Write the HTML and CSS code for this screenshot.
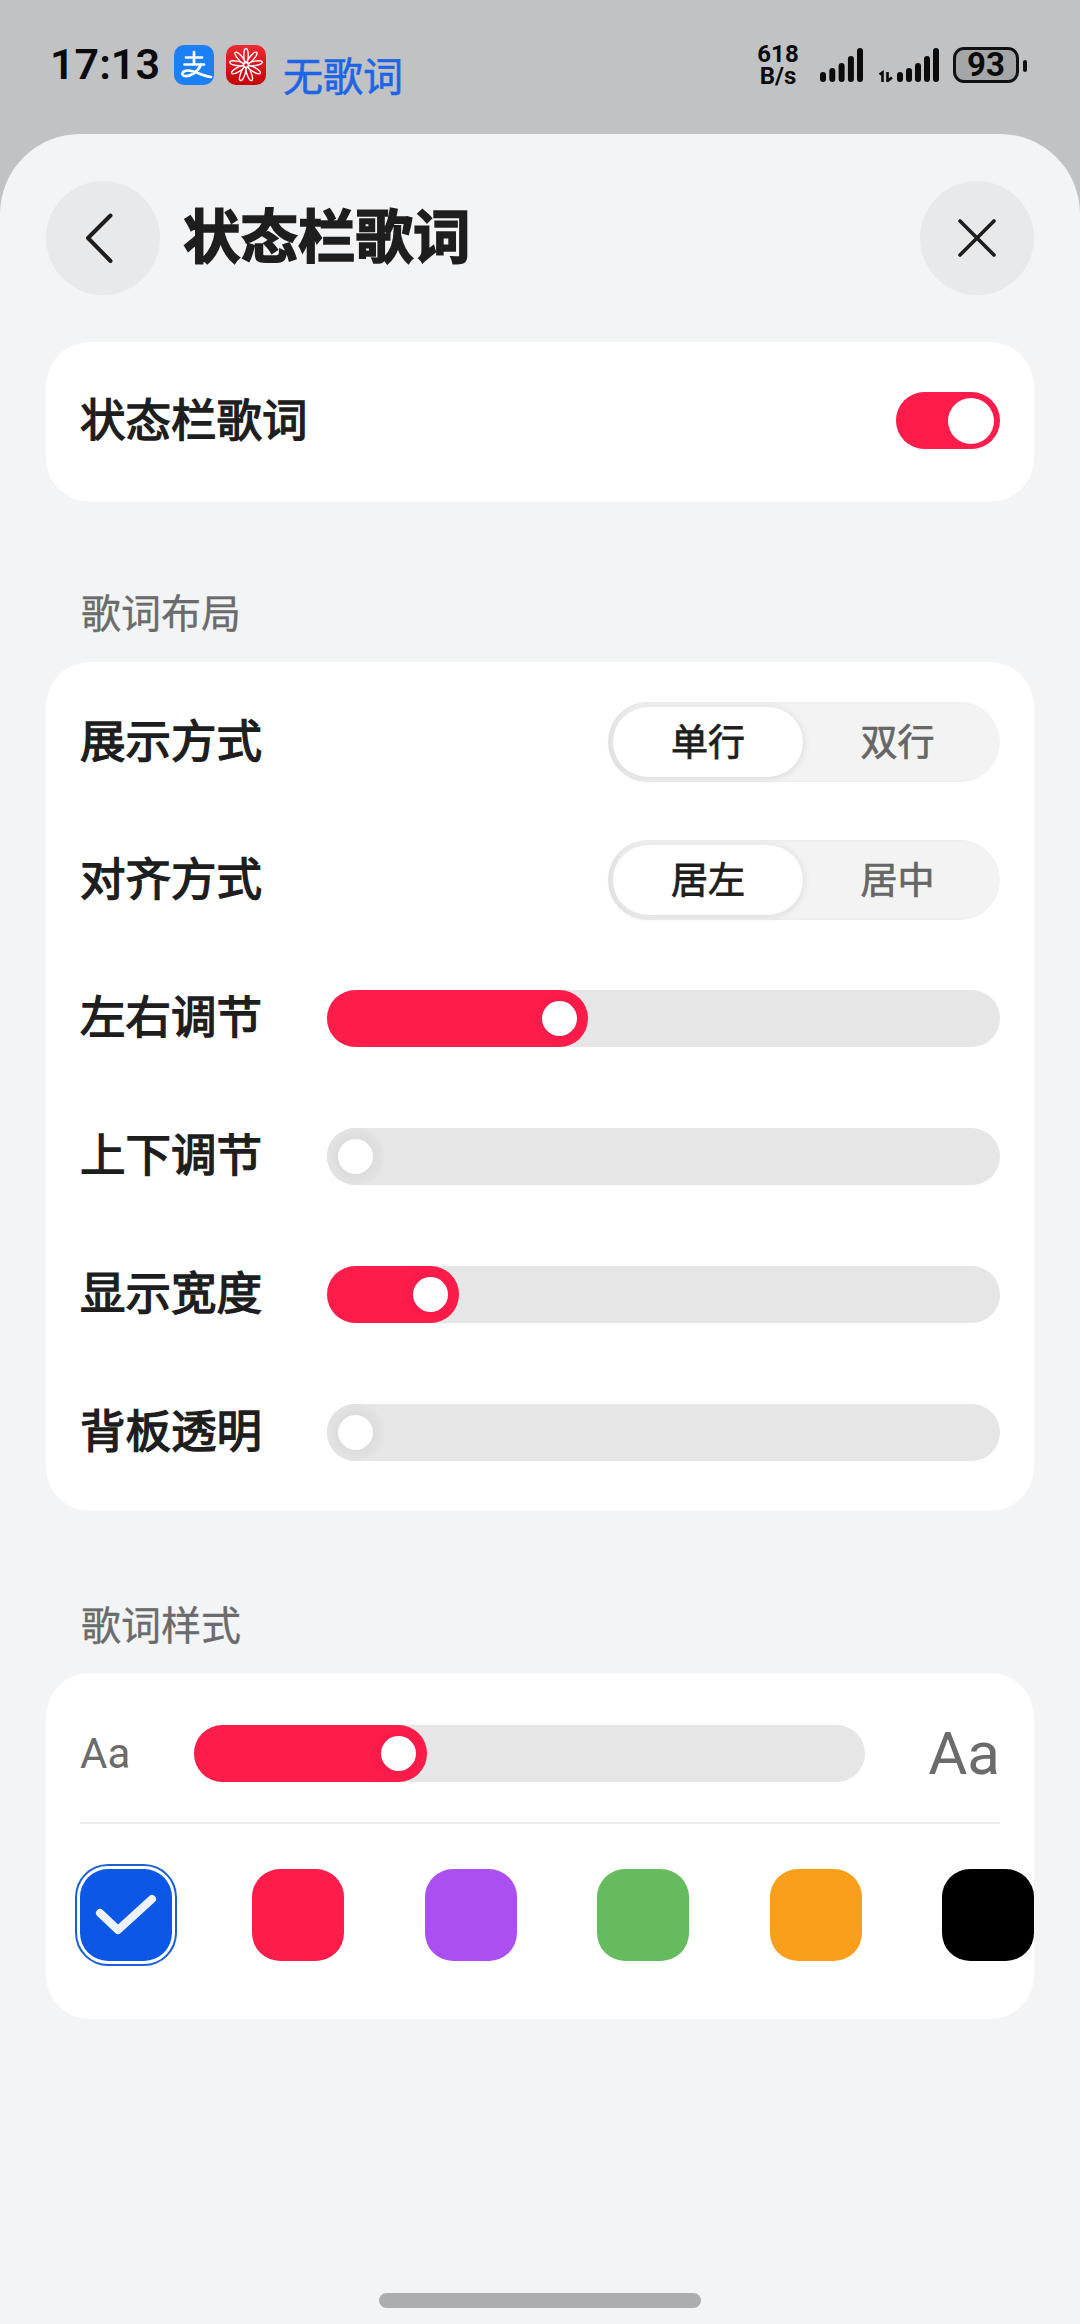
FILE: index.html
```html
<!DOCTYPE html>
<html>
<head>
	<title>状态栏歌词</title>
	<link rel="stylesheet" href="styles.css">
</head>
<body>
	<div id="statusbar">
		<div class="time">17:13</div>
		<svg class="app-icon" viewBox="0 0 40 40">
			<rect width="40" height="40" rx="10" fill="#1b7ff5"/>
			<path d="M12 12.500H28M20 7V19.500M10.500 19.500H30M27 19.500C24 27 16 32 11 31C6.500 30 8 25.500 14 25.500C21 25.500 28 31 37 32" fill="none" stroke="#fff" stroke-width="2.700" stroke-linecap="round"/>
		</svg>
		<svg class="app-icon app-icon-second" viewBox="0 0 40 40">
			<defs>
				<linearGradient id="redIcon" x1="0" y1="0" x2="0" y2="1">
					<stop offset="0" stop-color="#ee2a32"/>
					<stop offset="1" stop-color="#c90009"/>
				</linearGradient>
			</defs>
			<rect width="40" height="40" rx="10" fill="url(#redIcon)"/>
			<g fill="none" stroke="#fff" stroke-width="1.400">
				<ellipse cx="20" cy="10.500" rx="2.200" ry="7"/>
				<ellipse cx="20" cy="10.500" rx="2.200" ry="7" transform="rotate(40 20 20)"/>
				<ellipse cx="20" cy="10.500" rx="2.200" ry="7" transform="rotate(80 20 20)"/>
				<ellipse cx="20" cy="10.500" rx="2.200" ry="7" transform="rotate(120 20 20)"/>
				<ellipse cx="20" cy="10.500" rx="2.200" ry="7" transform="rotate(160 20 20)"/>
				<ellipse cx="20" cy="10.500" rx="2.200" ry="7" transform="rotate(200 20 20)"/>
				<ellipse cx="20" cy="10.500" rx="2.200" ry="7" transform="rotate(240 20 20)"/>
				<ellipse cx="20" cy="10.500" rx="2.200" ry="7" transform="rotate(280 20 20)"/>
				<ellipse cx="20" cy="10.500" rx="2.200" ry="7" transform="rotate(320 20 20)"/>
			</g>
			<circle cx="20" cy="20" r="2.500" fill="none" stroke="#fff" stroke-width="1.400"/>
		</svg>
		<div class="lyric-text">无歌词</div>
		<div class="status-right">
			<div class="net-speed">618<br>B/s</div>
			<svg class="signal" width="43" height="34" viewBox="0 0 43 34">
				<rect x="0" y="24" width="6" height="10" rx="3"/>
				<rect x="9.300" y="20" width="6" height="14" rx="3"/>
				<rect x="18.600" y="15" width="6" height="19" rx="3"/>
				<rect x="27.900" y="8" width="6" height="26" rx="3"/>
				<rect x="37" y="0" width="6" height="34" rx="3"/>
			</svg>
			<svg class="signal signal-second" width="60" height="34" viewBox="0 0 60 34">
				<path d="M0.500 26.500L3.500 24.500V34M8.500 24V34M13 29.500L8.500 33" fill="none" stroke="#0b0b0b" stroke-width="2.600"/>
				<rect x="18" y="24" width="6" height="10" rx="3"/>
				<rect x="27" y="20" width="6" height="14" rx="3"/>
				<rect x="36" y="15" width="6" height="19" rx="3"/>
				<rect x="45" y="8" width="6" height="26" rx="3"/>
				<rect x="54" y="0" width="6" height="34" rx="3"/>
			</svg>
			<div class="battery"><span class="battery-num">93</span></div>
			<div class="battery-nib"></div>
		</div>
	</div>

	<div id="sheet">
		<div class="header">
			<div class="round-btn">
				<svg width="40" height="60" viewBox="0 0 40 60"><path d="M27.500 7.500L5 30L27.500 53" fill="none" stroke="#1e1e1e" stroke-width="4" stroke-linecap="round" stroke-linejoin="round"/></svg>
			</div>
			<div class="title">状态栏歌词</div>
			<div class="round-btn round-btn-right">
				<svg width="40" height="40" viewBox="0 0 40 40"><path d="M3 3L37 37M37 3L3 37" fill="none" stroke="#1e1e1e" stroke-width="3.600" stroke-linecap="round"/></svg>
			</div>
		</div>

		<div class="card card-switch">
			<div class="label">状态栏歌词</div>
			<div class="toggle"><div class="toggle-knob"></div></div>
		</div>

		<div class="section-label">歌词布局</div>
		<div class="card card-rows">
			<div class="row">
				<div class="label">展示方式</div>
				<div class="segment">
					<div class="segment-item active">单行</div>
					<div class="segment-item">双行</div>
				</div>
			</div>
			<div class="row">
				<div class="label">对齐方式</div>
				<div class="segment">
					<div class="segment-item active">居左</div>
					<div class="segment-item">居中</div>
				</div>
			</div>
			<div class="row">
				<div class="label label-fixed">左右调节</div>
				<div class="slider"><div class="slider-fill" style="width: 261px"><div class="slider-knob"></div></div></div>
			</div>
			<div class="row">
				<div class="label label-fixed">上下调节</div>
				<div class="slider"><div class="slider-fill off" style="width: 57px"><div class="slider-knob"></div></div></div>
			</div>
			<div class="row">
				<div class="label label-fixed">显示宽度</div>
				<div class="slider"><div class="slider-fill" style="width: 132px"><div class="slider-knob"></div></div></div>
			</div>
			<div class="row">
				<div class="label label-fixed">背板透明</div>
				<div class="slider"><div class="slider-fill off" style="width: 57px"><div class="slider-knob"></div></div></div>
			</div>
		</div>

		<div class="section-label section-label-second">歌词样式</div>
		<div class="card card-style">
			<div class="size-row">
				<div class="aa-small">Aa</div>
				<div class="slider"><div class="slider-fill" style="width: 233px"><div class="slider-knob"></div></div></div>
				<div class="aa-big">Aa</div>
			</div>
			<div class="divider"></div>
			<div class="swatches">
				<div class="swatch selected blue">
					<svg width="62" height="42" viewBox="0 0 62 42"><path d="M5 19L23 36L57 5" fill="none" stroke="#eef2fb" stroke-width="8" stroke-linecap="round" stroke-linejoin="round"/></svg>
				</div>
				<div class="swatch red"></div>
				<div class="swatch purple"></div>
				<div class="swatch green"></div>
				<div class="swatch orange"></div>
				<div class="swatch black"></div>
			</div>
		</div>

		<div class="home-bar"></div>
	</div>
</body>
</html>
```

FILE: styles.css
```css
* {
	box-sizing: border-box;
}

html, body {
	margin: 0;
	padding: 0;
}

body {
	width: 1080px;
	height: 2324px;
	overflow: hidden;
	background: #c1c2c4;
	font-family: "Noto Sans CJK SC", sans-serif;
	color: #1e1e1e;
}

/* status bar */
#statusbar {
	display: flex;
	align-items: flex-start;
	height: 134px;
	padding-left: 50px;
}

.time {
	margin-top: 39px;
	font-family: Roboto, sans-serif;
	font-size: 43px;
	font-weight: 600;
	line-height: 50px;
	color: #0b0b0b;
}

.app-icon {
	width: 40px;
	height: 40px;
	margin-top: 45px;
	margin-left: 14px;
}

.app-icon-second {
	margin-left: 12px;
}

.lyric-text {
	margin-top: 49px;
	margin-left: 17px;
	font-size: 40px;
	line-height: 50px;
	-webkit-text-stroke: 0.6px #1e65e6;
	color: #1e65e6;
}

.status-right {
	display: flex;
	align-items: flex-start;
	margin-left: auto;
	padding-right: 53px;
}

.net-speed {
	width: 46px;
	margin-top: 43px;
	font-family: Roboto, sans-serif;
	font-size: 24px;
	font-weight: 700;
	line-height: 22px;
	text-align: center;
	color: #0b0b0b;
}

.signal {
	margin-top: 48px;
	margin-left: 19px;
	fill: #0b0b0b;
}

.signal-second {
	margin-left: 16px;
}

.battery {
	display: flex;
	align-items: center;
	justify-content: center;
	width: 66px;
	height: 36px;
	margin-top: 47px;
	margin-left: 14px;
	border: 3px solid #111;
	border-radius: 11px;
	background: #a5a6a8;
}

.battery-num {
	font-family: Roboto, sans-serif;
	font-size: 33px;
	font-weight: 700;
	line-height: 30px;
	color: #0b0b0b;
}

.battery-nib {
	width: 4px;
	height: 12px;
	margin-top: 60px;
	margin-left: 4px;
	border-radius: 2px;
	background: #111;
}

/* sheet */
#sheet {
	height: 2190px;
	padding: 47px 46px 0 46px;
	border-radius: 80px 80px 0 0;
	background: #f2f4f6;
}

.header {
	display: flex;
	align-items: center;
	height: 114px;
}

.round-btn {
	display: flex;
	align-items: center;
	justify-content: center;
	width: 114px;
	height: 114px;
	border-radius: 50%;
	background: #e8e9eb;
}

.round-btn-right {
	margin-left: auto;
}

.title {
	margin-left: 23px;
	padding-bottom: 11px;
	font-size: 57.5px;
	font-weight: 700;
	line-height: 70px;
	-webkit-text-stroke: 1.6px #1e1e1e;
}

.card {
	border-radius: 44px;
	background: #fff;
}

.card-switch {
	display: flex;
	align-items: center;
	justify-content: space-between;
	height: 160px;
	margin-top: 47px;
	padding: 0 34px;
}

.card-switch .label {
	padding-bottom: 11px;
}

.label {
	padding-bottom: 8px;
	font-size: 45.5px;
	font-weight: 400;
	line-height: 60px;
	-webkit-text-stroke: 1.4px #1e1e1e;
}

.label-fixed {
	flex: 0 0 247px;
}

.toggle {
	display: flex;
	justify-content: flex-end;
	align-items: center;
	width: 104px;
	height: 57px;
	margin-bottom: 3px;
	padding-right: 6px;
	border-radius: 29px;
	background: #fe1c4b;
}

.toggle-knob {
	width: 46px;
	height: 46px;
	border-radius: 50%;
	background: #fff;
}

.section-label {
	margin: 84px 0 26px 35px;
	font-size: 40px;
	line-height: 50px;
	-webkit-text-stroke: 0.3px #6b6b6b;
	color: #6b6b6b;
}

.section-label-second {
	margin-top: 87px;
	margin-bottom: 25px;
}

.card-rows {
	padding: 11px 34px 10px 34px;
}

.row {
	display: flex;
	align-items: center;
	justify-content: space-between;
	height: 138px;
}

/* single line / double line switch */
.segment {
	display: flex;
	width: 392px;
	height: 80px;
	padding: 5px 0 5px 5px;
	border-radius: 40px;
	background: #f3f3f3;
	box-shadow: inset 3px 0 3px #e6e6e6;
}

.segment-item {
	display: flex;
	flex: 1;
	align-items: center;
	justify-content: center;
	padding: 0 8px 5px 0;
	border-radius: 35px;
	font-size: 37px;
	-webkit-text-stroke: 0.7px #666;
	color: #666;
}

.segment-item.active {
	flex: 0 0 190px;
	padding-right: 0;
	background: #fff;
	box-shadow: 0 1px 8px rgba(0, 0, 0, 0.12);
	-webkit-text-stroke: 0.8px #1e1e1e;
	color: #1e1e1e;
}

/* sliders */
.slider {
	flex: 1;
	height: 57px;
	border-radius: 29px;
	background: #e6e6e6;
}

.slider-fill {
	display: flex;
	justify-content: flex-end;
	align-items: center;
	height: 100%;
	padding-right: 11px;
	border-radius: 29px;
	background: #fe1c4b;
}

.slider-fill.off {
	background: #e3e3e3;
}

.slider-knob {
	width: 35px;
	height: 35px;
	border-radius: 50%;
	background: #fff;
	box-shadow: 0 0 14px rgba(0, 0, 0, 0.08);
}

.card-style {
	height: 346px;
	padding: 52px 0 0 34px;
}

.size-row {
	display: flex;
	align-items: center;
	height: 57px;
	padding-right: 34px;
}

.aa-small {
	flex: 0 0 114px;
	font-family: Roboto, sans-serif;
	font-size: 42px;
	color: #6b6b6b;
}

.aa-big {
	flex: 0 0 135px;
	font-family: Roboto, sans-serif;
	font-size: 60px;
	text-align: right;
	color: #6b6b6b;
}

.divider {
	height: 2px;
	margin: 40px 34px 45px 0;
	background: #ececec;
}

.swatches {
	display: flex;
	justify-content: space-between;
}

.swatch {
	display: flex;
	align-items: center;
	justify-content: center;
	width: 92px;
	height: 92px;
	border-radius: 28px;
}

.swatch.selected {
	box-shadow: 0 0 0 3px #fff, 0 0 0 5px #1a5fd8;
}

.blue { background: #0b57e6; }
.red { background: #fe1c4b; }
.purple { background: #ab4ff0; }
.green { background: #65bb5e; }
.orange { background: #fa9f1c; }
.black { background: #000; }

.home-bar {
	width: 322px;
	height: 15px;
	margin: 274px auto 0 auto;
	border-radius: 8px;
	background: #acadaf;
}
```
